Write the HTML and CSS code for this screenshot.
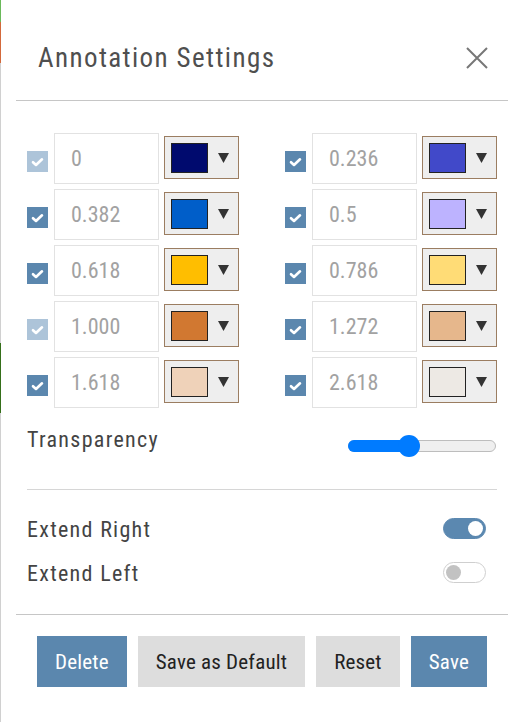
FILE: index.html
```html
<!DOCTYPE html>
<html>
<head>
<meta charset="utf-8">
<link rel="stylesheet" href="styles.css">
</head>
<body>
<div class="page">
  <div class="edge"></div>
  <div class="dialog">
    <div class="header">
      <div class="title">Annotation Settings</div>
      <svg class="close" width="22" height="22" viewBox="0 0 22 22"><path d="M1 1 L21 21 M21 1 L1 21" stroke="#777" stroke-width="2" fill="none"/></svg>
    </div>
    <div class="body">
      <div class="grid">
        <div class="cell"><span class="cb dis"><svg width="21" height="21" viewBox="0 0 21 21"><path d="M6 11.2 L9 14 L15 8.3" stroke="#fff" stroke-width="2.6" fill="none" stroke-linecap="round" stroke-linejoin="round"/></svg></span><div class="num">0</div><div class="cbtn"><span class="sw" style="background:#000a6e"></span><svg class="tri" width="11" height="10" viewBox="0 0 11 10"><polygon points="0,0 11,0 5.5,10" fill="#333"/></svg></div></div>
        <div class="cell"><span class="cb"><svg width="21" height="21" viewBox="0 0 21 21"><path d="M6 11.2 L9 14 L15 8.3" stroke="#fff" stroke-width="2.6" fill="none" stroke-linecap="round" stroke-linejoin="round"/></svg></span><div class="num">0.236</div><div class="cbtn"><span class="sw" style="background:#4149c9"></span><svg class="tri" width="11" height="10" viewBox="0 0 11 10"><polygon points="0,0 11,0 5.5,10" fill="#333"/></svg></div></div>

        <div class="cell"><span class="cb"><svg width="21" height="21" viewBox="0 0 21 21"><path d="M6 11.2 L9 14 L15 8.3" stroke="#fff" stroke-width="2.6" fill="none" stroke-linecap="round" stroke-linejoin="round"/></svg></span><div class="num">0.382</div><div class="cbtn"><span class="sw" style="background:#005ec9"></span><svg class="tri" width="11" height="10" viewBox="0 0 11 10"><polygon points="0,0 11,0 5.5,10" fill="#333"/></svg></div></div>
        <div class="cell"><span class="cb"><svg width="21" height="21" viewBox="0 0 21 21"><path d="M6 11.2 L9 14 L15 8.3" stroke="#fff" stroke-width="2.6" fill="none" stroke-linecap="round" stroke-linejoin="round"/></svg></span><div class="num">0.5</div><div class="cbtn"><span class="sw" style="background:#bdb3ff"></span><svg class="tri" width="11" height="10" viewBox="0 0 11 10"><polygon points="0,0 11,0 5.5,10" fill="#333"/></svg></div></div>

        <div class="cell"><span class="cb"><svg width="21" height="21" viewBox="0 0 21 21"><path d="M6 11.2 L9 14 L15 8.3" stroke="#fff" stroke-width="2.6" fill="none" stroke-linecap="round" stroke-linejoin="round"/></svg></span><div class="num">0.618</div><div class="cbtn"><span class="sw" style="background:#ffbe00"></span><svg class="tri" width="11" height="10" viewBox="0 0 11 10"><polygon points="0,0 11,0 5.5,10" fill="#333"/></svg></div></div>
        <div class="cell"><span class="cb"><svg width="21" height="21" viewBox="0 0 21 21"><path d="M6 11.2 L9 14 L15 8.3" stroke="#fff" stroke-width="2.6" fill="none" stroke-linecap="round" stroke-linejoin="round"/></svg></span><div class="num">0.786</div><div class="cbtn"><span class="sw" style="background:#ffdc76"></span><svg class="tri" width="11" height="10" viewBox="0 0 11 10"><polygon points="0,0 11,0 5.5,10" fill="#333"/></svg></div></div>

        <div class="cell"><span class="cb dis"><svg width="21" height="21" viewBox="0 0 21 21"><path d="M6 11.2 L9 14 L15 8.3" stroke="#fff" stroke-width="2.6" fill="none" stroke-linecap="round" stroke-linejoin="round"/></svg></span><div class="num">1.000</div><div class="cbtn"><span class="sw" style="background:#d17831"></span><svg class="tri" width="11" height="10" viewBox="0 0 11 10"><polygon points="0,0 11,0 5.5,10" fill="#333"/></svg></div></div>
        <div class="cell"><span class="cb"><svg width="21" height="21" viewBox="0 0 21 21"><path d="M6 11.2 L9 14 L15 8.3" stroke="#fff" stroke-width="2.6" fill="none" stroke-linecap="round" stroke-linejoin="round"/></svg></span><div class="num">1.272</div><div class="cbtn"><span class="sw" style="background:#e6b78c"></span><svg class="tri" width="11" height="10" viewBox="0 0 11 10"><polygon points="0,0 11,0 5.5,10" fill="#333"/></svg></div></div>

        <div class="cell"><span class="cb"><svg width="21" height="21" viewBox="0 0 21 21"><path d="M6 11.2 L9 14 L15 8.3" stroke="#fff" stroke-width="2.6" fill="none" stroke-linecap="round" stroke-linejoin="round"/></svg></span><div class="num">1.618</div><div class="cbtn"><span class="sw" style="background:#efd2b9"></span><svg class="tri" width="11" height="10" viewBox="0 0 11 10"><polygon points="0,0 11,0 5.5,10" fill="#333"/></svg></div></div>
        <div class="cell"><span class="cb"><svg width="21" height="21" viewBox="0 0 21 21"><path d="M6 11.2 L9 14 L15 8.3" stroke="#fff" stroke-width="2.6" fill="none" stroke-linecap="round" stroke-linejoin="round"/></svg></span><div class="num">2.618</div><div class="cbtn"><span class="sw" style="background:#ede9e4"></span><svg class="tri" width="11" height="10" viewBox="0 0 11 10"><polygon points="0,0 11,0 5.5,10" fill="#333"/></svg></div></div>
      </div>

      <div class="trow">
        <div class="label">Transparency</div>
        <div class="slider">
          <div class="fill"></div>
          <div class="knob"></div>
        </div>
      </div>

      <div class="sep"></div>

      <div class="opt">
        <div class="label">Extend Right</div>
        <div class="toggle on"><span class="dot"></span></div>
      </div>
      <div class="opt second">
        <div class="label">Extend Left</div>
        <div class="toggle"><span class="dot"></span></div>
      </div>
    </div>
    <div class="footer">
      <button class="btn blue">Delete</button>
      <button class="btn grey">Save as Default</button>
      <button class="btn grey">Reset</button>
      <button class="btn blue">Save</button>
    </div>
  </div>
</div>
</body>
</html>
```
FILE: styles.css
```css
html, body {
  margin: 0;
  padding: 0;
  background: #fff;
}
body {
  font-family: "Roboto Condensed", Roboto, sans-serif;
  color: #444;
}
.page {
  display: flex;
  min-height: 722px;
}
.edge {
  width: 1px;
  flex: none;
  background: linear-gradient(to bottom,
    #6ab95a 0, #6ab95a 22px,
    #d3693b 22px, #d3693b 63px,
    #d0d0d0 63px, #d0d0d0 343px,
    #356f1a 343px, #356f1a 413px,
    #d0d0d0 413px);
}
.dialog {
  flex: 1;
  padding: 0 15px;
  background: #fff;
}
.header {
  display: flex;
  justify-content: space-between;
  align-items: center;
  padding: 42px 20px 26px 22px;
  border-bottom: 1px solid #c6c6c6;
}
.title {
  font-size: 27px;
  line-height: 32px;
  letter-spacing: 1.4px;
  color: #4f4f4f;
}
.close {
  display: block;
}
.body {
  padding: 32px 11px 27px;
}
.grid {
  display: grid;
  grid-template-columns: 212px 212px;
  column-gap: 46px;
  row-gap: 5px;
}
.cell {
  display: flex;
  align-items: center;
}
.cb {
  width: 21px;
  height: 21px;
  flex: none;
  background: #5b87ae;
  margin-right: 6px;
  margin-top: 5px;
  display: block;
}
.cb svg {
  display: block;
}
.cb.dis {
  background: #adc4d9;
}
.num {
  width: 105px;
  height: 51px;
  box-sizing: border-box;
  border: 1px solid #e2e2e2;
  padding-left: 16px;
  display: flex;
  align-items: center;
  font-size: 22px;
  color: #a2a2a2;
}
.cbtn {
  width: 75px;
  height: 43px;
  margin-left: 5px;
  margin-top: -2px;
  box-sizing: border-box;
  border: 1px solid #9b7d61;
  background: #eeeeee;
  display: flex;
  align-items: center;
  padding-left: 6px;
}
.sw {
  width: 37px;
  height: 30px;
  box-sizing: border-box;
  border: 1px solid #222;
  display: block;
}
.tri {
  margin-left: 10px;
  display: block;
}
.trow {
  display: flex;
  justify-content: space-between;
  align-items: center;
  margin-top: 19px;
}
.label {
  font-size: 22px;
  line-height: 26px;
  letter-spacing: 1.3px;
  color: #444;
}
.slider {
  position: relative;
  width: 148px;
  height: 12px;
  box-sizing: border-box;
  border: 1px solid #bdbdbd;
  border-radius: 6px;
  background: #efefef;
  margin-top: 11px;
  margin-right: 1px;
}
.fill {
  position: absolute;
  left: -1px;
  top: -1px;
  width: 62px;
  height: 12px;
  background: #007bff;
  border-radius: 6px 0 0 6px;
}
.knob {
  position: absolute;
  left: 49px;
  top: -6px;
  width: 22px;
  height: 22px;
  border-radius: 50%;
  background: #007bff;
}
.sep {
  margin-top: 36px;
  border-top: 1px solid #d6d6d6;
}
.opt {
  display: flex;
  justify-content: space-between;
  align-items: center;
  margin-top: 27px;
}
.opt.second {
  margin-top: 18px;
}
.toggle {
  width: 43px;
  height: 21px;
  box-sizing: border-box;
  border-radius: 11px;
  border: 1px solid #cfcfcf;
  background: #fff;
  margin-right: 11px;
  margin-top: -4px;
  display: flex;
  align-items: center;
  padding: 0 2px;
}
.toggle .dot {
  width: 15px;
  height: 15px;
  border-radius: 50%;
  background: #c2c2c2;
  display: block;
}
.toggle.on {
  background: #5b88b0;
  border-color: #5b88b0;
  justify-content: flex-end;
}
.toggle.on .dot {
  background: #fff;
}
.footer {
  border-top: 1px solid #c6c6c6;
  padding: 21px 21px 0;
  display: flex;
  justify-content: space-between;
}
.btn {
  height: 51px;
  padding: 0 18px;
  border: none;
  font-family: "Roboto Condensed", Roboto, sans-serif;
  font-size: 21px;
  letter-spacing: 0.2px;
  cursor: pointer;
}
.btn.blue {
  background: #5b87ae;
  color: #fff;
}
.btn.grey {
  background: #dddddd;
  color: #222;
}
```
